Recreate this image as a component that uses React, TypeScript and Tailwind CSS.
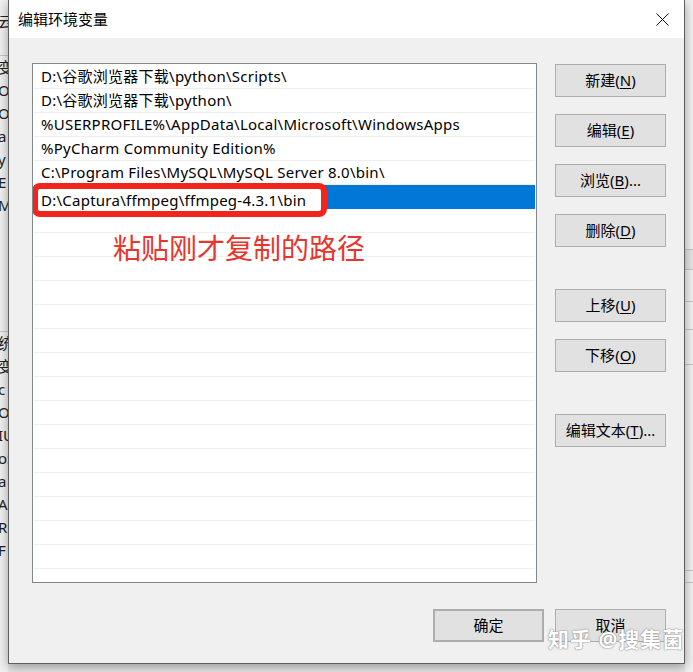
import React from 'react';

const paths = [
  'D:\\谷歌浏览器下载\\python\\Scripts\\',
  'D:\\谷歌浏览器下载\\python\\',
  '%USERPROFILE%\\AppData\\Local\\Microsoft\\WindowsApps',
  '%PyCharm Community Edition%',
  'C:\\Program Files\\MySQL\\MySQL Server 8.0\\bin\\',
];

const sideButtons = [
  { label: '新建', key: 'N', tail: '', gap: '' },
  { label: '编辑', key: 'E', tail: '', gap: 'mt-[17px]' },
  { label: '浏览', key: 'B', tail: '...', gap: 'mt-[17px]' },
  { label: '删除', key: 'D', tail: '', gap: 'mt-[17px]' },
  { label: '上移', key: 'U', tail: '', gap: 'mt-[42px]' },
  { label: '下移', key: 'O', tail: '', gap: 'mt-[17px]' },
  { label: '编辑文本', key: 'T', tail: '...', gap: 'mt-[42px]' },
];

const leftBits = ['云', '', '变', 'Or', 'Or', 'a', 'y', 'E', 'M', '', '', '', '', '', '统', '变', 'c', 'Or', 'IU', 'oS', 'a', 'A', 'R', 'F'];

const WinButton = ({ label, k, tail, className = '' }: { label: string; k?: string; tail?: string; className?: string }) => (
  <div
    className={`w-[111px] h-[33px] bg-[#e1e1e1] border border-[#adadad] flex items-center justify-center text-[15px] text-black ${className}`}
  >
    {label}
    {k && (
      <span>
        (<span className="underline underline-offset-2">{k}</span>){tail}
      </span>
    )}
  </div>
);

const App = () => {
  const rows = Array.from({ length: 22 }, (_, i) => paths[i] ?? '');

  return (
    <div className="relative w-[693px] h-[672px] bg-[#e6e6e6] flex overflow-hidden font-['Noto_Sans','Noto_Sans_CJK_SC',sans-serif]">
      {/* window behind, left edge */}
      <div className="w-[8px] h-full bg-[#f0f0f0] overflow-hidden flex flex-col pt-[10px] text-[15px] text-[#222] leading-[23px]">
        {leftBits.map((b, i) => (
          <div key={i} className={`h-[23px] whitespace-nowrap -ml-[2px] ${i === 1 || i === 13 ? 'border-b border-[#c8c8c8]' : ''}`}>
            {b}
          </div>
        ))}
      </div>

      {/* dialog */}
      <div className="relative z-10 w-[677px] h-[664px] bg-[#f0f0f0] border-x border-b border-[#5f5f5f] shadow-[0_3px_10px_rgba(0,0,0,0.35)] flex flex-col">
        <div className="h-[38px] bg-white flex items-center justify-between pl-[9px] pr-[15px]">
          <span className="text-[15px] text-black">编辑环境变量</span>
          <svg width="13" height="13" viewBox="0 0 13 13" className="mt-[1px]">
            <path d="M0.5 0.5 L12.5 12.5 M12.5 0.5 L0.5 12.5" stroke="#111" strokeWidth="1" />
          </svg>
        </div>

        <div className="flex pl-[23px] pt-[25px]">
          <div className="relative w-[505px] h-[520px] border border-[#828790] bg-white p-[1px] overflow-hidden">
            {rows.map((p, i) => (
              <div
                key={i}
                className={`h-[24px] flex items-center pl-[7px] text-[15px] tracking-[0.25px] whitespace-nowrap ${
                  i === 5 ? 'bg-[#0078d7] text-white' : 'text-black border-b border-[#efefef]'
                }`}
              >
                {p}
              </div>
            ))}

            {/* red annotation over the selected row */}
            <div className="absolute left-[-1px] top-[119px] w-[295px] h-[34px] border-[6px] border-[#f2241c] rounded-[8px] bg-white flex items-center pl-[3px] text-[15px] tracking-[0.25px] text-black whitespace-nowrap">
              D:\Captura\ffmpeg\ffmpeg-4.3.1\bin
            </div>
            <div className="absolute left-[80px] top-[169px] text-[28px] leading-none text-[#e8352e] font-['Noto_Sans_CJK_SC',sans-serif]">
              粘贴刚才复制的路径
            </div>
          </div>

          <div className="ml-[18px] pt-[1px] flex flex-col">
            {sideButtons.map((b) => (
              <WinButton key={b.key} label={b.label} k={b.key} tail={b.tail} className={b.gap} />
            ))}
          </div>
        </div>

        <div className="flex justify-end gap-[11px] pr-[18px] mt-[26px]">
          <WinButton label="确定" className="border-2 border-[#0078d7]" />
          <WinButton label="取消" />
        </div>
      </div>

      {/* window behind, right edge */}
      <div className="w-[8px] h-full bg-[#f0f0f0] flex flex-col">
        <div className="h-[250px] border-b border-[#c4c4c4]" />
        <div className="h-[20px] border-b border-[#c4c4c4] bg-[#e4e4e4]" />
        <div className="h-[32px] border-b border-[#c4c4c4]" />
        <div className="h-[28px] border-b border-[#c4c4c4]" />
        <div className="h-[35px] border-b border-[#c4c4c4]" />
        <div className="h-[206px] border-b border-[#c4c4c4]" />
        <div className="h-[12px] border-b border-[#c4c4c4]" />
      </div>

      {/* watermark */}
      <div className="absolute left-[548px] top-[629px] z-20 text-[21px] leading-none font-bold text-white tracking-[1px] [text-shadow:0_0_1px_#777,0_0_2px_#999]">
        知乎 @搜集菌
      </div>
    </div>
  );
};

export default App;
